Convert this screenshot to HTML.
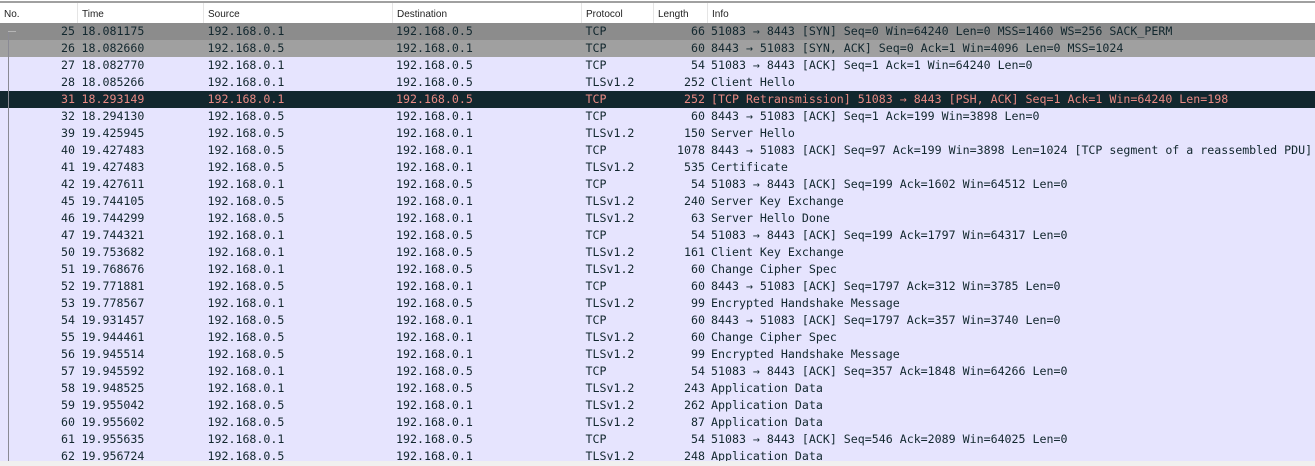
<!DOCTYPE html>
<html><head><meta charset="utf-8">
<style>
html,body{margin:0;padding:0;width:1315px;height:466px;overflow:hidden;background:#f0f0f0}
#top{position:absolute;left:0;top:0;width:1315px;height:23px;background:#fff}
#line{position:absolute;left:0;top:1px;width:1315px;height:2px;background:#a0a0a0}
.sep{position:absolute;top:3px;width:1px;height:20px;background:#e5e5e5}
.h{position:absolute;top:9px;font:10px/12px "Liberation Sans",sans-serif;color:#222}
#list{position:absolute;left:0;top:23px;width:1315px;height:438px;overflow:hidden;background:#e6e4fe}
.r{position:relative;height:17px;width:1315px;font:11.62px/17px "DejaVu Sans Mono",monospace;color:#12272e;white-space:pre}
.r span{position:absolute;top:0}
.n{right:1240px}.t{left:81.5px}.s{left:207.5px}.d{left:396px}.p{left:585.5px}.l{right:610px}.i{left:711px}
.g1{background:#8c8c8c}.g2{background:#a0a0a0}
.b{background:#12272e;color:#e98a84}
#v{position:absolute;left:8px;top:31px;width:1px;height:430px;background:#8a8a94}
#vh{position:absolute;left:8px;top:31px;width:8px;height:1px;background:#b5b5b5}
</style></head><body>
<div id="top"></div><div id="line"></div>
<div class="sep" style="left:77px"></div><div class="sep" style="left:203px"></div><div class="sep" style="left:392px"></div><div class="sep" style="left:581px"></div><div class="sep" style="left:653px"></div><div class="sep" style="left:707px"></div>
<div class="h" style="left:4px">No.</div><div class="h" style="left:82px">Time</div><div class="h" style="left:208px">Source</div><div class="h" style="left:397px">Destination</div><div class="h" style="left:586px">Protocol</div><div class="h" style="left:658px">Length</div><div class="h" style="left:712px">Info</div>
<div id="list">
<div class="r g1"><span class="n">25</span><span class="t">18.081175</span><span class="s">192.168.0.1</span><span class="d">192.168.0.5</span><span class="p">TCP</span><span class="l">66</span><span class="i">51083 → 8443 [SYN] Seq=0 Win=64240 Len=0 MSS=1460 WS=256 SACK_PERM</span></div>
<div class="r g2"><span class="n">26</span><span class="t">18.082660</span><span class="s">192.168.0.5</span><span class="d">192.168.0.1</span><span class="p">TCP</span><span class="l">60</span><span class="i">8443 → 51083 [SYN, ACK] Seq=0 Ack=1 Win=4096 Len=0 MSS=1024</span></div>
<div class="r"><span class="n">27</span><span class="t">18.082770</span><span class="s">192.168.0.1</span><span class="d">192.168.0.5</span><span class="p">TCP</span><span class="l">54</span><span class="i">51083 → 8443 [ACK] Seq=1 Ack=1 Win=64240 Len=0</span></div>
<div class="r"><span class="n">28</span><span class="t">18.085266</span><span class="s">192.168.0.1</span><span class="d">192.168.0.5</span><span class="p">TLSv1.2</span><span class="l">252</span><span class="i">Client Hello</span></div>
<div class="r b"><span class="n">31</span><span class="t">18.293149</span><span class="s">192.168.0.1</span><span class="d">192.168.0.5</span><span class="p">TCP</span><span class="l">252</span><span class="i">[TCP Retransmission] 51083 → 8443 [PSH, ACK] Seq=1 Ack=1 Win=64240 Len=198</span></div>
<div class="r"><span class="n">32</span><span class="t">18.294130</span><span class="s">192.168.0.5</span><span class="d">192.168.0.1</span><span class="p">TCP</span><span class="l">60</span><span class="i">8443 → 51083 [ACK] Seq=1 Ack=199 Win=3898 Len=0</span></div>
<div class="r"><span class="n">39</span><span class="t">19.425945</span><span class="s">192.168.0.5</span><span class="d">192.168.0.1</span><span class="p">TLSv1.2</span><span class="l">150</span><span class="i">Server Hello</span></div>
<div class="r"><span class="n">40</span><span class="t">19.427483</span><span class="s">192.168.0.5</span><span class="d">192.168.0.1</span><span class="p">TCP</span><span class="l">1078</span><span class="i">8443 → 51083 [ACK] Seq=97 Ack=199 Win=3898 Len=1024 [TCP segment of a reassembled PDU]</span></div>
<div class="r"><span class="n">41</span><span class="t">19.427483</span><span class="s">192.168.0.5</span><span class="d">192.168.0.1</span><span class="p">TLSv1.2</span><span class="l">535</span><span class="i">Certificate</span></div>
<div class="r"><span class="n">42</span><span class="t">19.427611</span><span class="s">192.168.0.1</span><span class="d">192.168.0.5</span><span class="p">TCP</span><span class="l">54</span><span class="i">51083 → 8443 [ACK] Seq=199 Ack=1602 Win=64512 Len=0</span></div>
<div class="r"><span class="n">45</span><span class="t">19.744105</span><span class="s">192.168.0.5</span><span class="d">192.168.0.1</span><span class="p">TLSv1.2</span><span class="l">240</span><span class="i">Server Key Exchange</span></div>
<div class="r"><span class="n">46</span><span class="t">19.744299</span><span class="s">192.168.0.5</span><span class="d">192.168.0.1</span><span class="p">TLSv1.2</span><span class="l">63</span><span class="i">Server Hello Done</span></div>
<div class="r"><span class="n">47</span><span class="t">19.744321</span><span class="s">192.168.0.1</span><span class="d">192.168.0.5</span><span class="p">TCP</span><span class="l">54</span><span class="i">51083 → 8443 [ACK] Seq=199 Ack=1797 Win=64317 Len=0</span></div>
<div class="r"><span class="n">50</span><span class="t">19.753682</span><span class="s">192.168.0.1</span><span class="d">192.168.0.5</span><span class="p">TLSv1.2</span><span class="l">161</span><span class="i">Client Key Exchange</span></div>
<div class="r"><span class="n">51</span><span class="t">19.768676</span><span class="s">192.168.0.1</span><span class="d">192.168.0.5</span><span class="p">TLSv1.2</span><span class="l">60</span><span class="i">Change Cipher Spec</span></div>
<div class="r"><span class="n">52</span><span class="t">19.771881</span><span class="s">192.168.0.5</span><span class="d">192.168.0.1</span><span class="p">TCP</span><span class="l">60</span><span class="i">8443 → 51083 [ACK] Seq=1797 Ack=312 Win=3785 Len=0</span></div>
<div class="r"><span class="n">53</span><span class="t">19.778567</span><span class="s">192.168.0.1</span><span class="d">192.168.0.5</span><span class="p">TLSv1.2</span><span class="l">99</span><span class="i">Encrypted Handshake Message</span></div>
<div class="r"><span class="n">54</span><span class="t">19.931457</span><span class="s">192.168.0.5</span><span class="d">192.168.0.1</span><span class="p">TCP</span><span class="l">60</span><span class="i">8443 → 51083 [ACK] Seq=1797 Ack=357 Win=3740 Len=0</span></div>
<div class="r"><span class="n">55</span><span class="t">19.944461</span><span class="s">192.168.0.5</span><span class="d">192.168.0.1</span><span class="p">TLSv1.2</span><span class="l">60</span><span class="i">Change Cipher Spec</span></div>
<div class="r"><span class="n">56</span><span class="t">19.945514</span><span class="s">192.168.0.5</span><span class="d">192.168.0.1</span><span class="p">TLSv1.2</span><span class="l">99</span><span class="i">Encrypted Handshake Message</span></div>
<div class="r"><span class="n">57</span><span class="t">19.945592</span><span class="s">192.168.0.1</span><span class="d">192.168.0.5</span><span class="p">TCP</span><span class="l">54</span><span class="i">51083 → 8443 [ACK] Seq=357 Ack=1848 Win=64266 Len=0</span></div>
<div class="r"><span class="n">58</span><span class="t">19.948525</span><span class="s">192.168.0.1</span><span class="d">192.168.0.5</span><span class="p">TLSv1.2</span><span class="l">243</span><span class="i">Application Data</span></div>
<div class="r"><span class="n">59</span><span class="t">19.955042</span><span class="s">192.168.0.5</span><span class="d">192.168.0.1</span><span class="p">TLSv1.2</span><span class="l">262</span><span class="i">Application Data</span></div>
<div class="r"><span class="n">60</span><span class="t">19.955602</span><span class="s">192.168.0.5</span><span class="d">192.168.0.1</span><span class="p">TLSv1.2</span><span class="l">87</span><span class="i">Application Data</span></div>
<div class="r"><span class="n">61</span><span class="t">19.955635</span><span class="s">192.168.0.1</span><span class="d">192.168.0.5</span><span class="p">TCP</span><span class="l">54</span><span class="i">51083 → 8443 [ACK] Seq=546 Ack=2089 Win=64025 Len=0</span></div>
<div class="r"><span class="n">62</span><span class="t">19.956724</span><span class="s">192.168.0.5</span><span class="d">192.168.0.1</span><span class="p">TLSv1.2</span><span class="l">248</span><span class="i">Application Data</span></div>
</div>
<div id="v"></div><div id="vh"></div>
</body></html>
